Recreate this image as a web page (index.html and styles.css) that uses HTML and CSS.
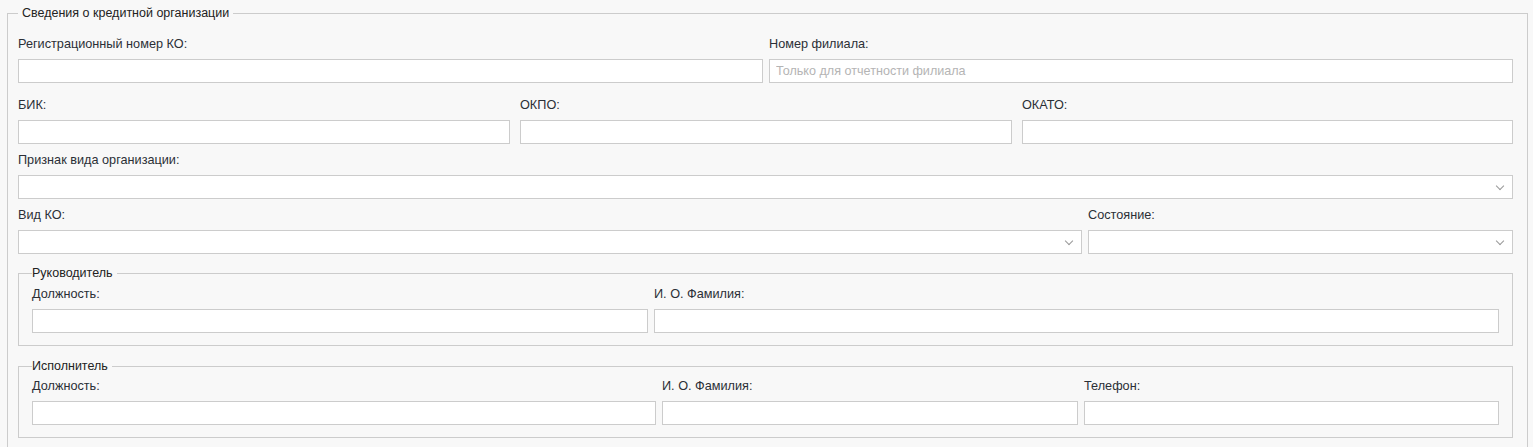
FILE: index.html
```html
<!DOCTYPE html>
<html lang="ru">
<head>
<meta charset="utf-8">
<title>Сведения о кредитной организации</title>
<link rel="stylesheet" href="styles.css">
</head>
<body>
<fieldset class="group outer">
  <legend class="group-title">Сведения о кредитной организации</legend>

  <div class="row row-first cols-reg">
    <div class="field">
      <label class="field-label">Регистрационный номер КО:</label>
      <input class="control" type="text">
    </div>
    <div class="field">
      <label class="field-label">Номер филиала:</label>
      <input class="control" type="text" placeholder="Только для отчетности филиала">
    </div>
  </div>

  <div class="row cols-codes">
    <div class="field">
      <label class="field-label">БИК:</label>
      <input class="control" type="text">
    </div>
    <div class="field">
      <label class="field-label">ОКПО:</label>
      <input class="control" type="text">
    </div>
    <div class="field">
      <label class="field-label">ОКАТО:</label>
      <input class="control" type="text">
    </div>
  </div>

  <div class="row">
    <div class="field">
      <label class="field-label">Признак вида организации:</label>
      <div class="control select"><span class="chevron"></span></div>
    </div>
  </div>

  <div class="row cols-kind">
    <div class="field">
      <label class="field-label">Вид КО:</label>
      <div class="control select"><span class="chevron"></span></div>
    </div>
    <div class="field">
      <label class="field-label">Состояние:</label>
      <div class="control select"><span class="chevron"></span></div>
    </div>
  </div>

  <fieldset class="group inner inner-head">
    <legend class="group-title">Руководитель</legend>
    <div class="row cols-head">
      <div class="field">
        <label class="field-label">Должность:</label>
        <input class="control" type="text">
      </div>
      <div class="field">
        <label class="field-label">И. О. Фамилия:</label>
        <input class="control" type="text">
      </div>
    </div>
  </fieldset>

  <fieldset class="group inner inner-exec">
    <legend class="group-title">Исполнитель</legend>
    <div class="row cols-exec">
      <div class="field">
        <label class="field-label">Должность:</label>
        <input class="control" type="text">
      </div>
      <div class="field">
        <label class="field-label">И. О. Фамилия:</label>
        <input class="control" type="text">
      </div>
      <div class="field">
        <label class="field-label">Телефон:</label>
        <input class="control" type="text">
      </div>
    </div>
  </fieldset>
</fieldset>
</body>
</html>
```

FILE: styles.css
```css
* { box-sizing: border-box; }

html, body {
  margin: 0;
  background: #f8f8f8;
}

body {
  font-family: "Liberation Sans", Arial, sans-serif;
  font-size: 12.7px;
  color: #333;
  padding: 5px 5px 0 7px;
}

.group {
  border: 1px solid #cccccc;
  margin: 0;
  min-width: 0;
}

.group-title {
  font-size: 12.5px;
  line-height: 16px;
  color: #222;
}

.outer {
  padding: 15px 14px 14px 10px;
}

.outer > .group-title {
  padding: 0 4px;
}

.inner {
  padding: 5px 13px 12px 13px;
  margin-top: 11px;
}

.inner-exec {
  margin-top: 12px;
  padding-top: 4px;
}

.inner > .group-title {
  padding: 0 4px 0 0;
}

.row {
  display: grid;
  grid-template-columns: 1fr;
  column-gap: 6px;
  margin-bottom: 8px;
}

.row:last-child { margin-bottom: 0; }

.row-first { margin-bottom: 14px; }

.cols-reg { grid-template-columns: 745fr 744fr; }
.cols-codes { grid-template-columns: 492fr 492fr 491fr; column-gap: 10px; }
.cols-kind { grid-template-columns: 1064fr 425fr; }
.cols-head { grid-template-columns: 616fr 845fr; }
.cols-exec { grid-template-columns: 624fr 416fr 415fr; }

.field {
  display: flex;
  flex-direction: column;
  min-width: 0;
}

.field-label {
  display: block;
  line-height: 16px;
  margin-bottom: 7px;
  color: #2b2f36;
}

.control {
  display: block;
  width: 100%;
  height: 24px;
  margin: 0;
  border: 1px solid #cccccc;
  background: #ffffff;
  padding: 0 6px;
  font-family: "Liberation Sans", Arial, sans-serif;
  font-size: 12.6px;
  color: #333;
  outline: none;
}

.control::placeholder {
  color: #b4b4b4;
  opacity: 1;
}

.select {
  display: flex;
  align-items: center;
  justify-content: flex-end;
  padding-right: 9px;
}

.chevron {
  width: 6px;
  height: 6px;
  border-right: 1px solid #999;
  border-bottom: 1px solid #999;
  transform: rotate(45deg);
  margin-top: -3px;
}
```
